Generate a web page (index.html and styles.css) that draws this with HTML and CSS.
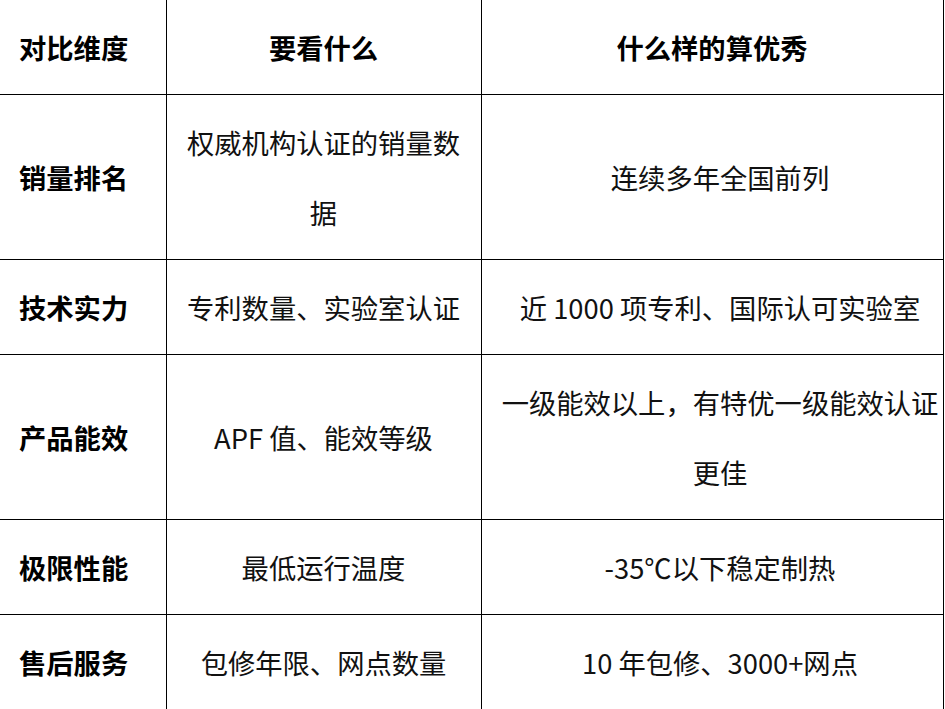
FILE: index.html
```html
<!DOCTYPE html>
<html lang="zh-CN">
<head>
<meta charset="utf-8">
<link rel="stylesheet" href="styles.css">
</head>
<body>
<table class="grid">
  <colgroup>
    <col class="c1"><col class="c2"><col class="c3">
  </colgroup>
  <tr class="head">
    <th class="lead">对比维度</th>
    <th>要看什么</th>
    <th>什么样的算优秀</th>
  </tr>
  <tr>
    <td class="lead">销量排名</td>
    <td>权威机构认证的销量数据</td>
    <td class="wide">连续多年全国前列</td>
  </tr>
  <tr>
    <td class="lead">技术实力</td>
    <td>专利数量、实验室认证</td>
    <td class="wide">近 1000 项专利、国际认可实验室</td>
  </tr>
  <tr>
    <td class="lead">产品能效</td>
    <td>APF 值、能效等级</td>
    <td class="wide">一级能效以上，有特优一级能效认证更佳</td>
  </tr>
  <tr>
    <td class="lead">极限性能</td>
    <td>最低运行温度</td>
    <td class="wide">-35℃以下稳定制热</td>
  </tr>
  <tr>
    <td class="lead">售后服务</td>
    <td>包修年限、网点数量</td>
    <td class="wide">10 年包修、3000+网点</td>
  </tr>
</table>
</body>
</html>
```
FILE: styles.css
```css
html, body {
  margin: 0;
  padding: 0;
  background: #fff;
}
body {
  font-family: "Noto Sans CJK SC", "Noto Sans", sans-serif;
  color: #111;
}
.grid {
  border-collapse: collapse;
  table-layout: fixed;
  width: 943px;
}
.c1 { width: 166px; }
.c2 { width: 315px; }
.c3 { width: 462px; }
.grid th,
.grid td {
  border: 1px solid #000;
  font-size: 27.3px;
  line-height: 70px;
  padding: 12px 11px;
  text-align: center;
  vertical-align: middle;
  font-weight: 400;
}
.grid tr.head th {
  border-top: none;
  font-weight: 700;
  color: #000;
}
.grid td.wide {
  padding-left: 18px;
  padding-right: 2px;
}
.grid .lead {
  border-left: none;
  text-align: left;
  padding-left: 19px;
  padding-right: 0;
  font-weight: 700;
  color: #000;
}
```
